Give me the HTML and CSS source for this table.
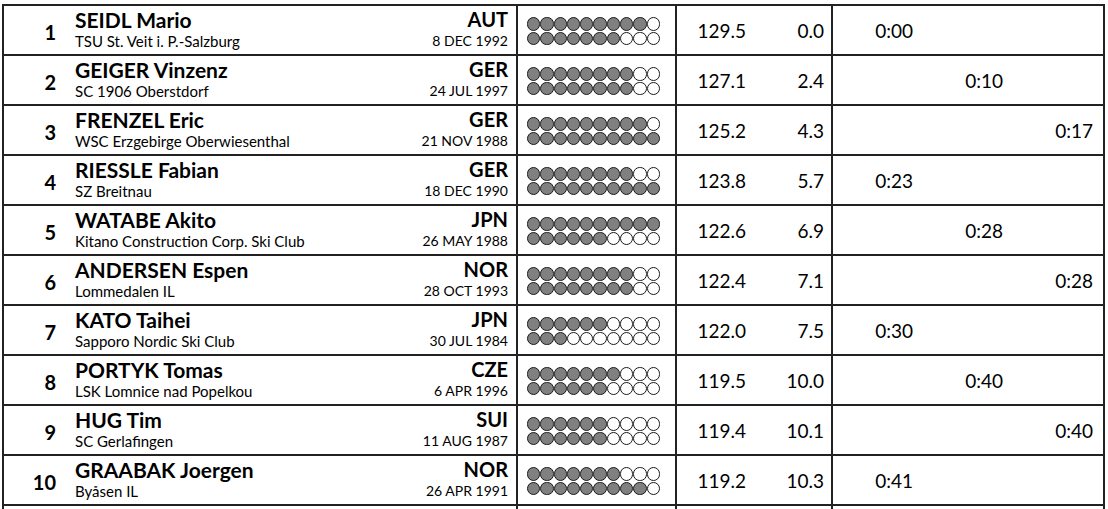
FILE: index.html
```html
<!DOCTYPE html>
<html>
<head>
<meta charset="utf-8">
<link rel="stylesheet" href="styles.css">
</head>
<body>
<div class="list">
  <div class="row">
    <div class="c-ath"><div class="rank">1</div><div class="who"><div class="name">SEIDL Mario</div><div class="club">TSU St. Veit i. P.-Salzburg</div></div><div class="nat"><div class="noc">AUT</div><div class="dob">8 DEC 1992</div></div></div>
    <div class="c-dots"><div class="dl"><i class="f"></i><i class="f"></i><i class="f"></i><i class="f"></i><i class="f"></i><i class="f"></i><i class="f"></i><i class="f"></i><i class="f"></i><i></i></div><div class="dl"><i class="f"></i><i class="f"></i><i class="f"></i><i class="f"></i><i class="f"></i><i class="f"></i><i class="f"></i><i></i><i></i><i></i></div></div>
    <div class="c-pts"><span class="pts">129.5</span><span class="beh">0.0</span></div>
    <div class="c-time"><span>0:00</span><span></span><span></span></div>
  </div>
  <div class="row">
    <div class="c-ath"><div class="rank">2</div><div class="who"><div class="name">GEIGER Vinzenz</div><div class="club">SC 1906 Oberstdorf</div></div><div class="nat"><div class="noc">GER</div><div class="dob">24 JUL 1997</div></div></div>
    <div class="c-dots"><div class="dl"><i class="f"></i><i class="f"></i><i class="f"></i><i class="f"></i><i class="f"></i><i class="f"></i><i class="f"></i><i class="f"></i><i></i><i></i></div><div class="dl"><i class="f"></i><i class="f"></i><i class="f"></i><i class="f"></i><i class="f"></i><i class="f"></i><i class="f"></i><i class="f"></i><i></i><i></i></div></div>
    <div class="c-pts"><span class="pts">127.1</span><span class="beh">2.4</span></div>
    <div class="c-time"><span></span><span>0:10</span><span></span></div>
  </div>
  <div class="row">
    <div class="c-ath"><div class="rank">3</div><div class="who"><div class="name">FRENZEL Eric</div><div class="club">WSC Erzgebirge Oberwiesenthal</div></div><div class="nat"><div class="noc">GER</div><div class="dob">21 NOV 1988</div></div></div>
    <div class="c-dots"><div class="dl"><i class="f"></i><i class="f"></i><i class="f"></i><i class="f"></i><i class="f"></i><i class="f"></i><i class="f"></i><i class="f"></i><i class="f"></i><i></i></div><div class="dl"><i class="f"></i><i class="f"></i><i class="f"></i><i class="f"></i><i class="f"></i><i class="f"></i><i class="f"></i><i class="f"></i><i class="f"></i><i class="f"></i></div></div>
    <div class="c-pts"><span class="pts">125.2</span><span class="beh">4.3</span></div>
    <div class="c-time"><span></span><span></span><span>0:17</span></div>
  </div>
  <div class="row">
    <div class="c-ath"><div class="rank">4</div><div class="who"><div class="name">RIESSLE Fabian</div><div class="club">SZ Breitnau</div></div><div class="nat"><div class="noc">GER</div><div class="dob">18 DEC 1990</div></div></div>
    <div class="c-dots"><div class="dl"><i class="f"></i><i class="f"></i><i class="f"></i><i class="f"></i><i class="f"></i><i class="f"></i><i class="f"></i><i class="f"></i><i></i><i></i></div><div class="dl"><i class="f"></i><i class="f"></i><i class="f"></i><i class="f"></i><i class="f"></i><i class="f"></i><i class="f"></i><i class="f"></i><i class="f"></i><i class="f"></i></div></div>
    <div class="c-pts"><span class="pts">123.8</span><span class="beh">5.7</span></div>
    <div class="c-time"><span>0:23</span><span></span><span></span></div>
  </div>
  <div class="row">
    <div class="c-ath"><div class="rank">5</div><div class="who"><div class="name">WATABE Akito</div><div class="club">Kitano Construction Corp. Ski Club</div></div><div class="nat"><div class="noc">JPN</div><div class="dob">26 MAY 1988</div></div></div>
    <div class="c-dots"><div class="dl"><i class="f"></i><i class="f"></i><i class="f"></i><i class="f"></i><i class="f"></i><i class="f"></i><i class="f"></i><i class="f"></i><i class="f"></i><i class="f"></i></div><div class="dl"><i class="f"></i><i class="f"></i><i class="f"></i><i class="f"></i><i class="f"></i><i class="f"></i><i></i><i></i><i></i><i></i></div></div>
    <div class="c-pts"><span class="pts">122.6</span><span class="beh">6.9</span></div>
    <div class="c-time"><span></span><span>0:28</span><span></span></div>
  </div>
  <div class="row">
    <div class="c-ath"><div class="rank">6</div><div class="who"><div class="name">ANDERSEN Espen</div><div class="club">Lommedalen IL</div></div><div class="nat"><div class="noc">NOR</div><div class="dob">28 OCT 1993</div></div></div>
    <div class="c-dots"><div class="dl"><i class="f"></i><i class="f"></i><i class="f"></i><i class="f"></i><i class="f"></i><i class="f"></i><i class="f"></i><i class="f"></i><i></i><i></i></div><div class="dl"><i class="f"></i><i class="f"></i><i class="f"></i><i class="f"></i><i class="f"></i><i class="f"></i><i class="f"></i><i class="f"></i><i></i><i></i></div></div>
    <div class="c-pts"><span class="pts">122.4</span><span class="beh">7.1</span></div>
    <div class="c-time"><span></span><span></span><span>0:28</span></div>
  </div>
  <div class="row">
    <div class="c-ath"><div class="rank">7</div><div class="who"><div class="name">KATO Taihei</div><div class="club">Sapporo Nordic Ski Club</div></div><div class="nat"><div class="noc">JPN</div><div class="dob">30 JUL 1984</div></div></div>
    <div class="c-dots"><div class="dl"><i class="f"></i><i class="f"></i><i class="f"></i><i class="f"></i><i class="f"></i><i class="f"></i><i></i><i></i><i></i><i></i></div><div class="dl"><i class="f"></i><i class="f"></i><i class="f"></i><i></i><i></i><i></i><i></i><i></i><i></i><i></i></div></div>
    <div class="c-pts"><span class="pts">122.0</span><span class="beh">7.5</span></div>
    <div class="c-time"><span>0:30</span><span></span><span></span></div>
  </div>
  <div class="row">
    <div class="c-ath"><div class="rank">8</div><div class="who"><div class="name">PORTYK Tomas</div><div class="club">LSK Lomnice nad Popelkou</div></div><div class="nat"><div class="noc">CZE</div><div class="dob">6 APR 1996</div></div></div>
    <div class="c-dots"><div class="dl"><i class="f"></i><i class="f"></i><i class="f"></i><i class="f"></i><i class="f"></i><i class="f"></i><i class="f"></i><i></i><i></i><i></i></div><div class="dl"><i class="f"></i><i class="f"></i><i class="f"></i><i class="f"></i><i class="f"></i><i class="f"></i><i></i><i></i><i></i><i></i></div></div>
    <div class="c-pts"><span class="pts">119.5</span><span class="beh">10.0</span></div>
    <div class="c-time"><span></span><span>0:40</span><span></span></div>
  </div>
  <div class="row">
    <div class="c-ath"><div class="rank">9</div><div class="who"><div class="name">HUG Tim</div><div class="club">SC Gerlafingen</div></div><div class="nat"><div class="noc">SUI</div><div class="dob">11 AUG 1987</div></div></div>
    <div class="c-dots"><div class="dl"><i class="f"></i><i class="f"></i><i class="f"></i><i class="f"></i><i class="f"></i><i class="f"></i><i></i><i></i><i></i><i></i></div><div class="dl"><i class="f"></i><i class="f"></i><i class="f"></i><i class="f"></i><i class="f"></i><i class="f"></i><i></i><i></i><i></i><i></i></div></div>
    <div class="c-pts"><span class="pts">119.4</span><span class="beh">10.1</span></div>
    <div class="c-time"><span></span><span></span><span>0:40</span></div>
  </div>
  <div class="row">
    <div class="c-ath"><div class="rank">10</div><div class="who"><div class="name">GRAABAK Joergen</div><div class="club">Byåsen IL</div></div><div class="nat"><div class="noc">NOR</div><div class="dob">26 APR 1991</div></div></div>
    <div class="c-dots"><div class="dl"><i class="f"></i><i class="f"></i><i class="f"></i><i class="f"></i><i class="f"></i><i class="f"></i><i class="f"></i><i></i><i></i><i></i></div><div class="dl"><i class="f"></i><i class="f"></i><i class="f"></i><i class="f"></i><i class="f"></i><i class="f"></i><i class="f"></i><i class="f"></i><i class="f"></i><i></i></div></div>
    <div class="c-pts"><span class="pts">119.2</span><span class="beh">10.3</span></div>
    <div class="c-time"><span>0:41</span><span></span><span></span></div>
  </div>
  <div class="row row-cut">
    <div class="c-ath"></div>
    <div class="c-dots"></div>
    <div class="c-pts"></div>
    <div class="c-time"></div>
  </div>
</div>
</body>
</html>
```

FILE: styles.css
```css
html, body {
  margin: 0;
  padding: 0;
  background: #fff;
  overflow: hidden;
}
body {
  font-family: Lato, "Liberation Sans", sans-serif;
  color: #000;
}
.list {
  margin: 4px 0 0 2px;
  width: 1103px;
  box-sizing: border-box;
  border-top: 2px solid #222;
  border-left: 2px solid #222;
  border-right: 2px solid #222;
}
.row {
  display: grid;
  grid-template-columns: 514px 159px 156px 270px;
  height: 50px;
  box-sizing: border-box;
  border-bottom: 2px solid #222;
}
.row.row-cut {
  height: 4px;
  border-bottom: none;
}
.row > div {
  box-sizing: border-box;
  border-right: 2px solid #222;
  min-width: 0;
}
.row > div:last-child {
  border-right: none;
}
.c-ath {
  display: grid;
  grid-template-columns: 52px 1fr auto;
  column-gap: 19px;
  padding-right: 8px;
}
.rank {
  align-self: center;
  text-align: right;
  font-weight: 700;
  font-size: 20px;
  padding-top: 4px;
}
.who, .nat {
  padding-top: 1px;
}
.nat {
  text-align: right;
}
.name {
  font-weight: 700;
  font-size: 21px;
  line-height: 25px;
}
.noc {
  font-weight: 700;
  font-size: 20px;
  line-height: 25px;
}
.club {
  font-size: 15px;
  line-height: 18px;
}
.dob {
  font-size: 14px;
  line-height: 18px;
}
.c-dots {
  display: flex;
  flex-direction: column;
  justify-content: center;
  gap: 1px;
  padding-left: 9px;
  padding-top: 2px;
}
.dl {
  display: flex;
}
.dl i {
  display: block;
  width: 13.3px;
  height: 13.3px;
  box-sizing: border-box;
  border: 1.3px solid #1a1a1a;
  border-radius: 50%;
  background: #fff;
}
.dl i.f {
  background: #808080;
}
.c-pts {
  display: flex;
  align-items: center;
  font-size: 19px;
}
.pts {
  width: 69px;
  text-align: right;
}
.beh {
  width: 78px;
  text-align: right;
}
.c-time {
  display: grid;
  grid-template-columns: 90px 90px 90px;
  align-items: center;
  font-size: 19px;
}
.c-time span {
  text-align: right;
  padding-right: 10px;
}
```
